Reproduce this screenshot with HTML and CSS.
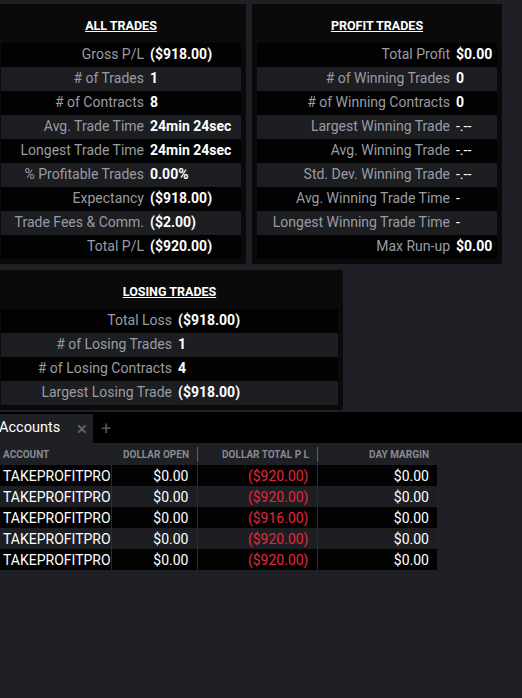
FILE: index.html
```html
<!DOCTYPE html>
<html lang="en">
<head>
  <meta charset="UTF-8" />
  <meta name="viewport" content="width=device-width, initial-scale=1.0"/>
  <title>Performance</title>
  <link rel="stylesheet" href="styles.css">
</head>
<body>
  <div class="riepilogo">
    <div class="riga-pannelli">
      <!-- Statistiche generali -->
      <section class="pannello pannello-tutti">
        <h3>ALL TRADES</h3>
        <div class="voce"><span class="etichetta">Gross P/L</span><span class="valore">($918.00)</span></div>
        <div class="voce"><span class="etichetta"># of Trades</span><span class="valore">1</span></div>
        <div class="voce"><span class="etichetta"># of Contracts</span><span class="valore">8</span></div>
        <div class="voce"><span class="etichetta">Avg. Trade Time</span><span class="valore">24min 24sec</span></div>
        <div class="voce"><span class="etichetta">Longest Trade Time</span><span class="valore">24min 24sec</span></div>
        <div class="voce"><span class="etichetta">% Profitable Trades</span><span class="valore">0.00%</span></div>
        <div class="voce"><span class="etichetta">Expectancy</span><span class="valore">($918.00)</span></div>
        <div class="voce"><span class="etichetta">Trade Fees &amp; Comm.</span><span class="valore">($2.00)</span></div>
        <div class="voce"><span class="etichetta">Total P/L</span><span class="valore">($920.00)</span></div>
      </section>

      <!-- Operazioni in profitto -->
      <section class="pannello pannello-profitto">
        <h3>PROFIT TRADES</h3>
        <div class="voce"><span class="etichetta">Total Profit</span><span class="valore">$0.00</span></div>
        <div class="voce"><span class="etichetta"># of Winning Trades</span><span class="valore">0</span></div>
        <div class="voce"><span class="etichetta"># of Winning Contracts</span><span class="valore">0</span></div>
        <div class="voce"><span class="etichetta">Largest Winning Trade</span><span class="valore vuoto">-.--</span></div>
        <div class="voce"><span class="etichetta">Avg. Winning Trade</span><span class="valore vuoto">-.--</span></div>
        <div class="voce"><span class="etichetta">Std. Dev. Winning Trade</span><span class="valore vuoto">-.--</span></div>
        <div class="voce"><span class="etichetta">Avg. Winning Trade Time</span><span class="valore vuoto">-</span></div>
        <div class="voce"><span class="etichetta">Longest Winning Trade Time</span><span class="valore vuoto">-</span></div>
        <div class="voce"><span class="etichetta">Max Run-up</span><span class="valore">$0.00</span></div>
      </section>
    </div>

    <div class="riga-pannelli">
      <!-- Operazioni in perdita -->
      <section class="pannello pannello-perdita">
        <h3>LOSING TRADES</h3>
        <div class="voce"><span class="etichetta">Total Loss</span><span class="valore">($918.00)</span></div>
        <div class="voce"><span class="etichetta"># of Losing Trades</span><span class="valore">1</span></div>
        <div class="voce"><span class="etichetta"># of Losing Contracts</span><span class="valore">4</span></div>
        <div class="voce"><span class="etichetta">Largest Losing Trade</span><span class="valore">($918.00)</span></div>
      </section>
    </div>
  </div>

  <!-- Schede -->
  <div class="barra-schede">
    <div class="scheda">
      <span class="titolo-scheda">Accounts</span>
      <span class="chiudi">&times;</span>
    </div>
    <span class="aggiungi">+</span>
  </div>

  <!-- Tabella conti -->
  <table class="conti">
    <colgroup>
      <col class="col-conto">
      <col class="col-aperto">
      <col class="col-totale">
      <col class="col-margine">
    </colgroup>
    <thead>
      <tr>
        <th class="sinistra">ACCOUNT</th>
        <th>DOLLAR OPEN</th>
        <th class="separato">DOLLAR TOTAL P L</th>
        <th class="separato">DAY MARGIN</th>
      </tr>
    </thead>
    <tbody>
      <tr><td class="sinistra">TAKEPROFITPRO</td><td>$0.00</td><td class="negativo">($920.00)</td><td>$0.00</td></tr>
      <tr><td class="sinistra">TAKEPROFITPRO</td><td>$0.00</td><td class="negativo">($920.00)</td><td>$0.00</td></tr>
      <tr><td class="sinistra">TAKEPROFITPRO</td><td>$0.00</td><td class="negativo">($916.00)</td><td>$0.00</td></tr>
      <tr><td class="sinistra">TAKEPROFITPRO</td><td>$0.00</td><td class="negativo">($920.00)</td><td>$0.00</td></tr>
      <tr><td class="sinistra">TAKEPROFITPRO</td><td>$0.00</td><td class="negativo">($920.00)</td><td>$0.00</td></tr>
    </tbody>
  </table>
</body>
</html>
```

FILE: styles.css
```css
:root {
  --sfondo: #1f2025;
  --pannello: #0a0a0b;
  --riga-scura: #020202;
  --riga-chiara: #1d1e22;
  --testo: #ffffff;
  --testo-spento: #9a9ca2;
  --rosso: #e3283c;
}

* {
  margin: 0;
  padding: 0;
  box-sizing: border-box;
}

body {
  background-color: var(--sfondo);
  font-family: Roboto, 'Liberation Sans', sans-serif;
  font-size: 14px;
  color: var(--testo);
  overflow: hidden;
}

.riepilogo {
  margin-left: -4px;
  padding-top: 4px;
  display: flex;
  flex-direction: column;
  gap: 6px;
}

.riga-pannelli {
  display: flex;
  gap: 6px;
}

.pannello {
  background: var(--pannello);
  padding: 0 5px 5px;
}

.pannello-tutti { width: 250px; --larghezza-etichetta: 143px; }
.pannello-profitto { width: 250px; --larghezza-etichetta: 193px; }
.pannello-perdita { width: 347px; --larghezza-etichetta: 171px; }

.pannello h3 {
  font-size: 12.5px;
  font-weight: bold;
  line-height: 14px;
  text-align: center;
  text-decoration: underline;
  padding: 15px 0 10px;
}

.voce {
  display: flex;
  gap: 6px;
  height: 24px;
  line-height: 23px;
  white-space: nowrap;
  background: var(--riga-scura);
}

.voce:nth-of-type(even) {
  background: var(--riga-chiara);
}

.etichetta {
  flex: 0 0 var(--larghezza-etichetta);
  text-align: right;
  color: var(--testo-spento);
}

.valore {
  font-weight: bold;
}

.valore.vuoto {
  font-weight: normal;
}

/* barra delle schede */
.barra-schede {
  margin-top: 2px;
  height: 31px;
  background: #000;
  display: flex;
  align-items: flex-end;
}

.scheda {
  width: 93px;
  height: 29px;
  background: var(--sfondo);
  display: flex;
  align-items: center;
  justify-content: space-between;
  padding: 0 6px 0 0;
}

.titolo-scheda {
  margin-left: -1px;
  margin-top: -2px;
  font-size: 14.5px;
}

.chiudi {
  color: #66686d;
  font-size: 19px;
  line-height: 1;
}

.aggiungi {
  color: #55575c;
  font-size: 18px;
  line-height: 29px;
  margin-left: 8px;
}

/* tabella dei conti */
.conti {
  border-collapse: collapse;
  table-layout: fixed;
  width: 437px;
}

.col-conto { width: 111px; }
.col-aperto { width: 86px; }
.col-totale { width: 120px; }
.col-margine { width: 120px; }

.conti th {
  height: 22px;
  font-size: 10px;
  font-weight: bold;
  color: #878a90;
  text-align: right;
  padding: 0 8px 0 3px;
  white-space: nowrap;
  background: var(--sfondo);
}

.conti th.separato {
  background-image: linear-gradient(#5b5d62, #5b5d62);
  background-size: 1px 15px;
  background-position: left center;
  background-repeat: no-repeat;
}

.conti td {
  height: 21px;
  text-align: right;
  padding: 0 8px 0 3px;
  white-space: nowrap;
  overflow: hidden;
  border-left: 1px solid #2a2b30;
  background: var(--riga-scura);
}

.conti tbody tr:nth-child(even) td {
  background: var(--riga-chiara);
}

.conti .sinistra {
  text-align: left;
  padding-left: 3px;
  padding-right: 0;
}

.conti td.sinistra {
  border-left: none;
}

.conti td.negativo {
  color: var(--rosso);
}
```
